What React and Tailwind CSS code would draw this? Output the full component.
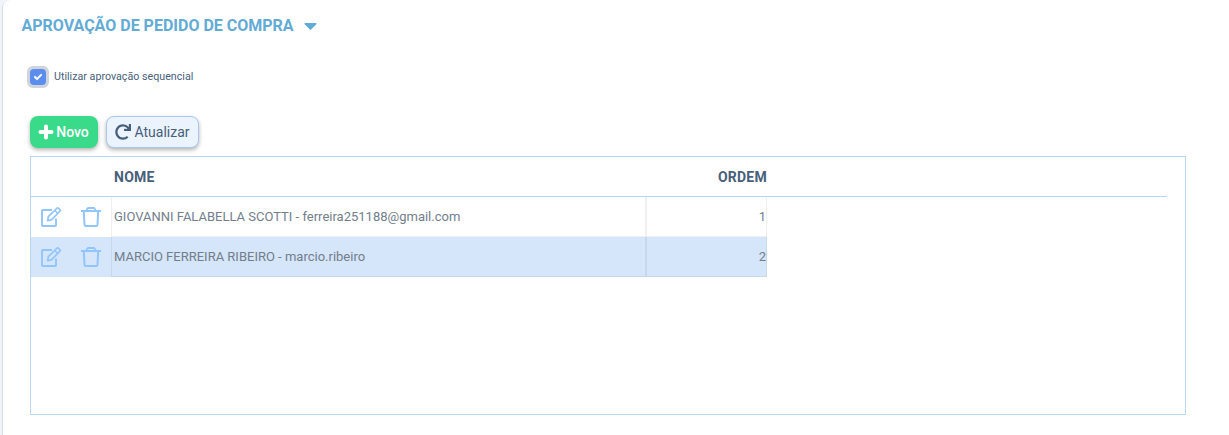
import React, { useState } from 'react';
import { FaCaretDown, FaCheck, FaPlus, FaRedo } from 'react-icons/fa';

const approvers = [
  { name: 'GIOVANNI FALABELLA SCOTTI - ferreira251188@gmail.com', order: 1 },
  { name: 'MARCIO FERREIRA RIBEIRO - marcio.ribeiro', order: 2 },
];

function EditIcon() {
  return (
    <svg
      className="w-5 h-5"
      viewBox="0 0 20 20"
      fill="none"
      stroke="currentColor"
      strokeWidth="1.9"
      strokeLinejoin="round"
    >
      <path d="M11 3H1.7a.7.7 0 0 0-.7.7v14.6a.7.7 0 0 0 .7.7h12.6a.7.7 0 0 0 .7-.7V11.5" />
      <path
        strokeWidth="1.7"
        d="M6.6 13.6l.7-3.9 8.3-8.2a1.6 1.6 0 0 1 2.2 0l.8.8a1.6 1.6 0 0 1 0 2.2l-8.2 8.3-3.8.8z"
      />
      <path strokeWidth="1.5" d="M13.8 3.5l2.9 2.9" />
    </svg>
  );
}

function TrashIcon() {
  return (
    <svg
      className="w-5 h-5"
      viewBox="0 0 20 20"
      fill="none"
      stroke="currentColor"
      strokeWidth="2"
      strokeLinejoin="round"
    >
      <path d="M0 4h20" />
      <path strokeWidth="1.8" d="M5.4 3.6l.9-1.9c.2-.4.6-.7 1-.7h5.4c.4 0 .8.3 1 .7l.9 1.9" />
      <path d="M2.8 4.2l.7 13.6c.1.7.6 1.2 1.3 1.2h10.4c.7 0 1.2-.5 1.3-1.2l.7-13.6" />
    </svg>
  );
}

function ApproverRow({ approver, selected }) {
  return (
    <div className={`flex h-10 w-[736px] ${selected ? 'bg-[#d5e5fa]' : 'bg-white'}`}>
      <div className="flex w-20 items-center text-[#93c5fd]">
        <button className="flex w-10 justify-center">
          <EditIcon />
        </button>
        <button className="flex w-10 justify-center">
          <TrashIcon />
        </button>
      </div>
      <div className="flex w-[535px] items-center border-x border-b border-black/6 pl-0.5">
        {approver.name}
      </div>
      <div className="flex w-[121px] items-center justify-end border-x border-b border-black/6">
        {approver.order}
      </div>
    </div>
  );
}

export default function App() {
  const [sequential, setSequential] = useState(true);

  return (
    <div className="h-[435px] overflow-hidden bg-[#f1f5f9] pl-0.5 font-[Roboto,sans-serif]">
      <div className="h-[450px] rounded-tl-lg border-l border-[#d8e0ea] bg-white pl-[27px] pr-[43px]">
        <h2 className="-ml-[8.5px] flex h-[52px] items-center text-base font-bold text-[#62abd5]">
          APROVAÇÃO DE PEDIDO DE COMPRA
          <FaCaretDown className="ml-1.5 -mt-px" size={21} />
        </h2>

        <label className="flex h-[50px] items-center text-[10.7px] text-[#475f7b]">
          <input
            type="checkbox"
            className="sr-only"
            checked={sequential}
            onChange={() => setSequential(!sequential)}
          />
          <span className="-ml-[3px] mr-[5px] flex size-[22px] items-center justify-center rounded-md bg-[#cfd4dc]">
            <span className="flex size-4 items-center justify-center rounded bg-[#5a8dee] text-white">
              {sequential && <FaCheck size={8} stroke="currentColor" strokeWidth={50} />}
            </span>
          </span>
          Utilizar aprovação sequencial
        </label>

        <div className="mt-3.5 flex gap-2 text-sm">
          <button className="flex h-8 w-[68px] items-center justify-center gap-0.5 rounded-lg bg-[#39da8a] pr-px font-medium text-white shadow-[0_2px_4px_rgba(0,0,0,0.3)]">
            <FaPlus size={16} stroke="currentColor" strokeWidth={30} />
            Novo
          </button>
          <button className="flex h-8 w-[93px] items-center justify-center gap-[3px] rounded-lg border border-[#a9c8f0] bg-[#ebf3fe] text-[#475f7b] shadow-[0_2px_4px_rgba(0,0,0,0.3)]">
            <FaRedo size={16} />
            Atualizar
          </button>
        </div>

        <div className="mt-2 h-[259px] border border-[#bad6f2] text-[13px] text-[#727e8c]">
          <div className="mr-[18px] flex h-10 items-center border-b border-[#bad6f2] pl-[83px] text-sm font-bold tracking-[0.25px] text-[#475f7b]">
            <div className="w-[532px]">NOME</div>
            <div className="w-[121px] text-right">ORDEM</div>
          </div>
          {approvers.map((approver) => (
            <ApproverRow
              key={approver.order}
              approver={approver}
              selected={approver.order === 2}
            />
          ))}
        </div>
      </div>
    </div>
  );
}
